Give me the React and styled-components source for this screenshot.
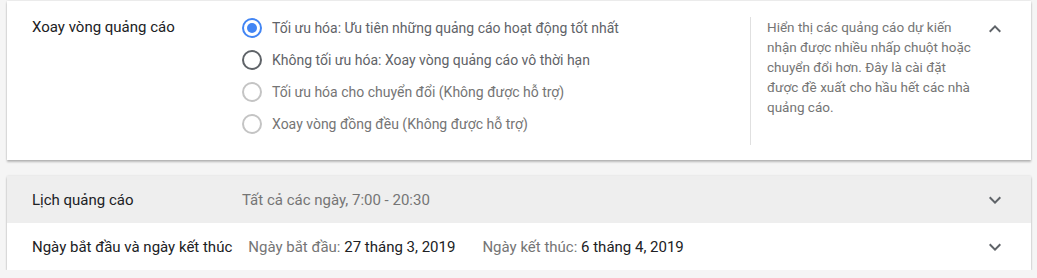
import React from "react";
import styled, { createGlobalStyle } from "styled-components";

const GlobalStyle = createGlobalStyle`
  html, body {
    margin: 0;
    padding: 0;
    background: #f5f5f5;
    font-family: Roboto, "Liberation Sans", sans-serif;
  }
`;

const Page = styled.div`
  padding: 1px 6px 0 7px;
  display: flex;
  flex-direction: column;
  gap: 16px;
`;

const Card = styled.div`
  background: #fff;
  box-shadow: 0 2px 2px rgba(0, 0, 0, 0.24), 0 0 2px rgba(0, 0, 0, 0.12);
`;

const ExpandedSection = styled.div`
  display: flex;
  align-items: flex-start;
  padding: 16px 24px 15px 25px;
`;

const Label = styled.div`
  min-width: 194px;
  margin-right: 16px;
  font-size: 15px;
  line-height: 20px;
  color: #202124;
  white-space: nowrap;
`;

const Options = styled.div`
  flex: 1;
  display: flex;
  flex-direction: column;
  gap: 12px;
  padding-top: 1px;
`;

const Option = styled.label`
  display: flex;
  align-items: center;
  gap: 10px;
  font-size: 14px;
  line-height: 20px;
  color: ${(p) => (p.disabled ? "#757575" : "#5f6368")};
`;

const RadioCircle = styled.span`
  box-sizing: border-box;
  width: 20px;
  height: 20px;
  border-radius: 50%;
  border: 2px solid
    ${(p) => (p.checked ? "#4285f4" : p.disabled ? "#c4c4c4" : "#5f6368")};
  display: flex;
  align-items: center;
  justify-content: center;
  &::after {
    content: "";
    width: 10px;
    height: 10px;
    border-radius: 50%;
    background: #4285f4;
    display: ${(p) => (p.checked ? "block" : "none")};
  }
`;

const Help = styled.div`
  box-sizing: border-box;
  width: 225px;
  border-left: 1px solid #e0e0e0;
  padding: 0 0 28px 16px;
  font-size: 13.5px;
  line-height: 20px;
  color: #757575;
  white-space: nowrap;
`;

const IconBox = styled.div`
  width: 24px;
  height: 24px;
  margin-left: ${(p) => p.offset || 0}px;
  display: flex;
  align-items: center;
  justify-content: center;
  color: #5f6368;
`;

const Row = styled.div`
  display: flex;
  align-items: center;
  height: 47px;
  padding: 0 24px 0 25px;
  background: ${(p) => (p.shaded ? "#eeeeee" : "#fff")};
`;

const Summary = styled.div`
  flex: 1;
  display: flex;
  gap: 27px;
  font-size: 15px;
  color: #757575;
  white-space: nowrap;
`;

const Value = styled.span`
  color: #202124;
`;

const Chevron = ({ up }) => (
  <svg width="24" height="24" viewBox="0 0 24 24" fill="currentColor">
    {up ? (
      <path d="M7.41 15.41L12 10.83l4.59 4.58L18 14l-6-6-6 6z" />
    ) : (
      <path d="M7.41 8.59L12 13.17l4.59-4.58L18 10l-6 6-6-6 1.41-1.41z" />
    )}
  </svg>
);

const options = [
  { text: "Tối ưu hóa: Ưu tiên những quảng cáo hoạt động tốt nhất", checked: true },
  { text: "Không tối ưu hóa: Xoay vòng quảng cáo vô thời hạn" },
  { text: "Tối ưu hóa cho chuyển đổi (Không được hỗ trợ)", disabled: true },
  { text: "Xoay vòng đồng đều (Không được hỗ trợ)", disabled: true },
];

const helpLines = [
  "Hiển thị các quảng cáo dự kiến",
  "nhận được nhiều nhấp chuột hoặc",
  "chuyển đổi hơn. Đây là cài đặt",
  "được đề xuất cho hầu hết các nhà",
  "quảng cáo.",
];

export default function App() {
  return (
    <Page>
      <GlobalStyle />
      <Card>
        <ExpandedSection>
          <Label>Xoay vòng quảng cáo</Label>
          <Options>
            {options.map((o) => (
              <Option key={o.text} disabled={o.disabled}>
                <RadioCircle checked={o.checked} disabled={o.disabled} />
                {o.text}
              </Option>
            ))}
          </Options>
          <Help>
            {helpLines.map((l, i) => (
              <div key={i}>{l}</div>
            ))}
          </Help>
          <IconBox offset={8}>
            <Chevron up />
          </IconBox>
        </ExpandedSection>
      </Card>
      <Card>
        <Row shaded>
          <Label>Lịch quảng cáo</Label>
          <Summary>Tất cả các ngày, 7:00 - 20:30</Summary>
          <IconBox>
            <Chevron />
          </IconBox>
        </Row>
        <Row>
          <Label>Ngày bắt đầu và ngày kết thúc</Label>
          <Summary>
            <span>
              Ngày bắt đầu: <Value>27 tháng 3, 2019</Value>
            </span>
            <span>
              Ngày kết thúc: <Value>6 tháng 4, 2019</Value>
            </span>
          </Summary>
          <IconBox>
            <Chevron />
          </IconBox>
        </Row>
      </Card>
    </Page>
  );
}
